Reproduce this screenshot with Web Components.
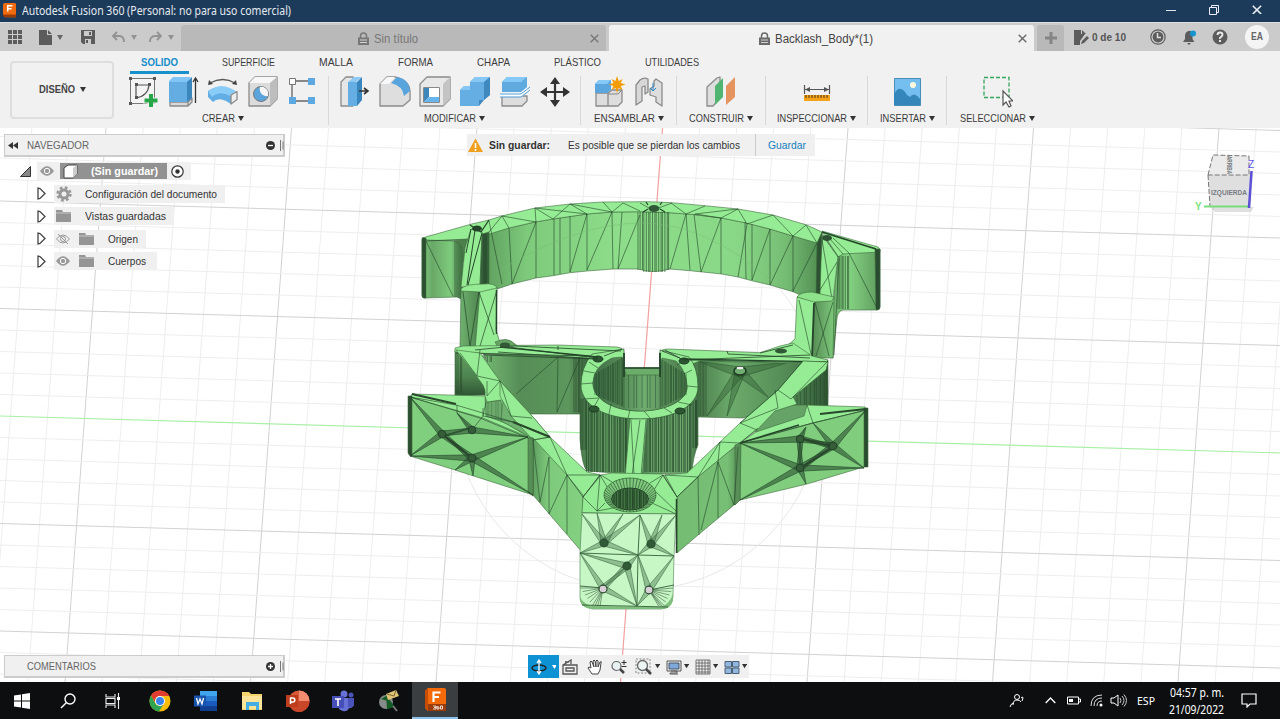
<!DOCTYPE html>
<html lang="es"><head><meta charset="utf-8"><title>Autodesk Fusion 360</title>
<style>html,body{margin:0;height:100%;overflow:hidden;background:#f1f1f1}body{font-family:"Liberation Sans",Arial,sans-serif;color:#333}</style></head>
<body><fusion-app></fusion-app>
<script>
const define=(name,cls)=>customElements.define(name,cls);
class Base extends HTMLElement{
  connectedCallback(){ if(this.shadowRoot)return; this.attachShadow({mode:'open'}).innerHTML='<style>:host{box-sizing:border-box}*{box-sizing:border-box}svg{display:block}</style>'+this.render(); this.ready&&this.ready(); }
}
const g='#5c5c5c';
const cube='stroke="#8b8b8b" stroke-width="1.3" stroke-linejoin="round"';
/* name: [width, height, markup] */
const ICONS={
 fusion:[14,16,'<path d="M2 0h10q2 0 2 2v13H2l-2-2V2q0-2 2-2z" fill="#f06a10"/><path d="M0 12h14v3H2l-2-2z" fill="#9a3c07"/><path d="M5 9V3h5M5 6h4" stroke="#fff" stroke-width="1.600" fill="none"/>'],
 apps:[14,14,`<g fill="${g}"><path d="M0 0h4v4H0zM5 0h4v4H5zM10 0h4v4h-4zM0 5h4v4H0zM5 5h4v4H5zM10 5h4v4h-4zM0 10h4v4H0zM5 10h4v4H5zM10 10h4v4h-4z"/></g>`],
 file:[13,15,`<path d="M0 0h8v5h5v10H0zM9 0l4 4H9z" fill="${g}"/>`],
 save:[14,14,`<path fill-rule="evenodd" d="M0 0h14v14H2l-2-2zM3 1v5h8V1zM4 9v5h6V9z" fill="${g}"/><path d="M8 2h2v3H8zM5 10h2v3H5z" fill="${g}"/>`],
 undo:[13,12,'<path d="M5 1L1 5l4 4M1 5h6q5 0 5 6" fill="none" stroke="#929292" stroke-width="1.800"/>'],
 redo:[13,12,'<path d="M8 1l4 4-4 4M12 5H6q-5 0-5 6" fill="none" stroke="#929292" stroke-width="1.800"/>'],
 drop:[6,5,'<path d="M0 0h6L3 5z" fill="currentColor"/>'],
 lock:[11,13,'<path d="M2.500 6V4q0-3 3-3t3 3v2" fill="none" stroke="currentColor" stroke-width="1.500"/><path d="M0 5.500h11V13H0z" fill="currentColor"/><path d="M2 8h7M2 10.500h7" stroke="#ddd" stroke-width=".9"/>'],
 x:[9,9,'<path d="M.7.7l7.600 7.600M8.300.7L.7 8.300" stroke="currentColor" stroke-width="1.400"/>'],
 plus:[12,12,'<path d="M6 0v12M0 6h12" stroke="#858585" stroke-width="3"/>'],
 min:[10,10,'<path d="M0 5.500h10" stroke="#dfe5ec"/>'],
 restore:[10,10,'<path d="M.5 2.500h7v7h-7zM2.500 2V.5h7v7H8" fill="none" stroke="#eef"/>'],
 docs:[15,15,`<path d="M0 0h7v4h4l-5 7v4H0zM8 0l4 4H8z" fill="${g}"/><path d="M7 14l1-3 5-5 2 2-5 5z" fill="${g}"/>`],
 clock:[16,16,`<circle cx="8" cy="8" r="7.200" fill="none" stroke="${g}" stroke-width="1.200"/><circle cx="8" cy="8" r="5.400" fill="${g}"/><path d="M7.500 4v4.500H11" fill="none" stroke="#ddd" stroke-width="1.500"/>`],
 bell:[15,15,`<path d="M1 12l2-3V6q0-4 3.500-5t4 5v3l2 3zM5 13h4l-2 2z" fill="${g}"/><circle cx="11" cy="3.500" r="3" fill="#1596d1"/>`],
 help:[16,16,`<circle cx="8" cy="8" r="7.500" fill="${g}"/><path d="M5.500 6q0-2.500 2.500-2.500t2.500 2.300q0 1.200-1.500 2T8 10" fill="none" stroke="#e8e8e8" stroke-width="1.900"/><path d="M7 11h2v2H7z" fill="#e8e8e8"/>`],
 sketch:[32,32,`<path d="M3.500 2.500h24v25h-24z" fill="#f4f4f4" stroke="#777"/><path d="M10 9h12M9 22V9M9 22q12-2 13-13" fill="none" stroke="#555" stroke-width="1.200"/><path d="M2 1h3v3H2zM26 1h3v3h-3zM2 26h3v3H2zM8 7h3v3H8zM21 7h3v3h-3zM8 20h3v3H8z" fill="#555"/><path d="M23.500 17v15M16 24.500h16" stroke="#f2f2f2" stroke-width="6"/><path d="M24 18v13M17.500 24.500h13" stroke="#27a549" stroke-width="4"/>`],
 extrude:[32,32,`<g ${cube}><path d="M3 26h18v4H3zM21 26l4-4v4l-4 4z" fill="#d8d8d8"/></g><path d="M2 5l4-4h18l-3 5H2z" fill="#80c5f5"/><path d="M2 6h18v20H2z" fill="#63ade3"/><path d="M20 6l5-5v21l-5 4z" fill="#3b86bd"/><path d="M28.500 27V3M26 6l2.500-4L31 6" stroke="#333" stroke-width="1.300" fill="none"/>`],
 revolve:[32,32,`<path d="M3 7Q16 0 28 7" fill="none" stroke="#555" stroke-width="1.300"/><path d="M1 9l1-5 4 4zM30 9l-1-5-4 4z" fill="#444"/><path d="M1 15q14-9 25 0l4 1-6 12-5-3q-8-4-13 1l-5-5z" fill="#62ade4"/><path d="M1 15q14-10 29 1l-7 4Q13 14 5 21z" fill="#8accf8"/><path d="M24 19l6-3.500v8L24 28z" fill="#eee" ${cube}/>`],
 hole:[32,32,`<path d="M2 7l6-6h22v22l-7 7H2z" fill="#dcdcdc" ${cube}/><path d="M2 7l6-6h22l-7 6z" fill="#f7f7f7"/><path d="M23 7l7-6v22l-7 7z" fill="#bdbdbd"/><circle cx="14" cy="18" r="7.500" fill="#5ba5dc" stroke="#777"/><path d="M13 11a7 7 0 0 0 8 9q1-6-3-8-2-2-5-1z" fill="#f5f5f5"/>`],
 pattern:[32,32,'<path d="M5 7v18M9 5h13M9 25h13" stroke="#666" stroke-width="1.300"/><path d="M2.500 2.500h6v6h-6z" fill="#fff" stroke="#777"/><path d="M21 2h7v7h-7zM2 21h7v7H2zM21 21h7v7h-7z" fill="#5da8e0"/>'],
 press:[32,32,`<path d="M2 6l5-5h7v29H2z" fill="#e6e6e6" ${cube}/><path d="M9 6l6-5h8l-6 5z" fill="#8ccaf5"/><path d="M9 6h9v24H9z" fill="#64aee4"/><path d="M18 6l5-5v23l-5 6z" fill="#3985be"/><path d="M20 15h8M25 12l4 3-4 3" fill="none" stroke="#333" stroke-width="1.600"/>`],
 fillet:[32,32,`<path d="M1 8l7-7h8q14 3 15 14v9l-7 6H1z" fill="#dedede" ${cube}/><path d="M1 8l7-7h8l-6 7z" fill="#f8f8f8"/><path d="M12 7l6-6q12 2 13 14l-6 5Q24 10 12 7z" fill="#58a4dc"/>`],
 shell:[32,32,`<path d="M1 8l7-7h23v22l-7 7H1z" fill="#e8e8e8" ${cube}/><path d="M24 8l7-7v22l-7 7z" fill="#c4c4c4"/><path d="M4.500 11.500h16v15h-16z" fill="#fff" stroke="#888"/><path d="M5 12h5v9l-5 5z" fill="#3d86bb"/><path d="M5 26l5-5h10v5z" fill="#68b5ee"/>`],
 combine:[32,32,'<path d="M11 6l5-5h15v18l-6 5h-4l-1 6H1V14l4-4h6z" fill="#65aee4"/><path d="M11 6l5-5h15l-6 5zM1 14l4-4h6v4z" fill="#86c7f5"/><path d="M25 6l6-5v18l-6 5zM20 24h5l-5 6z" fill="#4089be"/>'],
 split:[32,32,`<path d="M3 20h25v5l-5 5H3z" fill="#ddd" ${cube}/><path d="M3 6l5-5h20v11l-6 4H3z" fill="#60aae0"/><path d="M3 6l5-5h20l-6 5z" fill="#85c9f8"/><path d="M1 19h21l8-7" stroke="#fff" stroke-width="4" fill="none"/><path d="M1 18h21l9-7M1 21h21l9-7" stroke="#4f9bd4" fill="none"/>`],
 move:[32,32,'<path d="M16 4v24M4 16h24" stroke="#333" stroke-width="2.200"/><path d="M16 1l5 7H11zM16 31l5-7H11zM1 16l7-5v10zM31 16l-7-5v10z" fill="#333"/>'],
 component:[32,32,`<path d="M3 17h12v13H3zM15 17l4-3h10v12l-4 4H15z" fill="#ddd" ${cube}/><path d="M2 8l4-4h12v10l-4 3H2z" fill="#5ba6de"/><path d="M2 8l4-4h12l-4 4z" fill="#86c8f7"/><path d="M15 18h10l4-4" stroke="#888" fill="none"/><path d="M23 0l1.700 5 4-2-2 4 5 1.500-5 1.500 2 4-4-2L23 17l-1.500-5-4 2 2-4-5-1.500 5-1.500-2-4 4 2z" fill="#f59d00" transform="translate(1)"/>`],
 joint:[32,32,`<path d="M3 9l4-5q4-3 8-1v13l-3 2v-8l-3 1v14l-6 4z" fill="#d8d8d8" ${cube}/><path d="M17 13l4-3V5l2-2 6 4v23l-6-4v-5l-6-2z" fill="#ddd" ${cube}/><path d="M20 7v8M17 12l3 3 3-3" stroke="#2687c5" fill="none"/>`],
 plane:[32,32,`<path d="M2 11L12 2l3-1v21L8 30H2z" fill="#dedede" ${cube}/><path d="M10 10L18 2v19l-8 8z" fill="#4fb571"/><path d="M21 10L30 1v20l-9 8z" fill="#e5935f"/>`],
 ruler:[32,32,'<path d="M3.500 9v9M28.500 9v9M4 13.500h24" stroke="#555" stroke-width="1.200"/><path d="M4 13.500l5-2.500v5zM28 13.500l-5-2.500v5z" fill="#555"/><path d="M3 19h26v6H3z" fill="#f5a31a"/><path d="M5 19v3M8 19v3M11 19v3M14 19v3M17 19v3M20 19v3M23 19v3M26 19v3" stroke="#4b3510"/>'],
 image:[32,32,'<path d="M3.500 2.500h26v27h-26z" fill="#75bff0" stroke="#478eb9"/><path d="M3 18q6-11 13 1l3 2q4-6 10 2v6H3z" fill="#3587bb"/><circle cx="22" cy="9" r="3" fill="#fff9dc"/>'],
 select:[32,32,'<path d="M3 1.500h25v20H3z" fill="none" stroke="#36a65a" stroke-width="1.300" stroke-dasharray="4 2"/><path d="M23 15v14l3-3 3 5 2-1-2-5h4z" fill="#fff" stroke="#555" stroke-width="1.200" transform="translate(-1)"/>'],
 rew:[10,7,'<path d="M5 0v7L0 3.500zM10 0v7L5 3.500z" fill="#333"/>'],
 minus:[9,9,'<circle cx="4.500" cy="4.500" r="4.500" fill="#333"/><path d="M2 4.500h5" stroke="#fff" stroke-width="1.300"/>'],
 add:[9,9,'<circle cx="4.500" cy="4.500" r="4.500" fill="#333"/><path d="M2 4.500h5M4.500 2v5" stroke="#fff" stroke-width="1.300"/>'],
 grip:[4,11,'<path d="M.5 0v11M3 1.500v8" stroke="#777"/>'],
 open:[11,11,'<path d="M.5 10.500h10v-10z" fill="#888" stroke="#333"/>'],
 closed:[9,13,'<path d="M1 1v11l2-.5 5-5-5-5z" fill="#fff" stroke="#444" stroke-width="1.300"/>'],
 eye:[14,10,'<path d="M0 5q7-9.500 14 0-7 9.500-14 0z" fill="#999"/><circle cx="7" cy="5" r="2.700" fill="#999" stroke="#fff"/>'],
 eyeoff:[14,12,'<path d="M.5 6q6.500-8 13 0-6.500 8-13 0z" fill="none" stroke="#999"/><circle cx="7" cy="6" r="2.500" fill="none" stroke="#999"/><path d="M2 1l10 10" stroke="#999"/>'],
 body:[15,15,'<path d="M1 4l4-3h9v9l-4 4H1z" fill="#fff" stroke="#444"/><path d="M10 4l4-3v9l-4 4z" fill="#ccc"/>'],
 radio:[13,13,'<circle cx="6.500" cy="6.500" r="5.700" fill="#fff" stroke="#333" stroke-width="1.200"/><circle cx="6.500" cy="6.500" r="2.200" fill="#333"/>'],
 gear:[16,16,'<circle cx="8" cy="8" r="6.200" fill="none" stroke="#999" stroke-width="3" stroke-dasharray="2.600 2.270"/><circle cx="8" cy="8" r="4" fill="none" stroke="#999" stroke-width="3"/>'],
 folder:[15,12,'<path d="M0 0h6l1 2h8v10H0z" fill="#959595"/><path d="M0 3h15" stroke="#d5d5d5" stroke-width=".8"/>'],
 warn:[15,14,'<path d="M7.500.5L15 14H0z" fill="#f0a01e"/><path d="M7.500 5v5M7.500 11v2" stroke="#fff" stroke-width="1.600"/>'],
 orbit:[16,16,'<ellipse cx="8" cy="9" rx="7" ry="3" fill="none" stroke="#222" stroke-width="1.500"/><path d="M8 2v12M6 4l2-3 2 3M6 12l2 3 2-3" fill="none" stroke="#fff" stroke-width="1.300"/>'],
 look:[16,16,'<path d="M2 6h13v9H1V6zM4 9h8v3H4zM1 6l8-5v4M3 3h4" fill="none" stroke="#555" stroke-width="1.300"/>'],
 hand:[16,16,'<path d="M5 15L1 9q0-2 3 0L3 3q1-2 2 0l2 5-1-6q1-2 2 0l1 6V2q1-2 2 0v6l2-5q2-1 1 1l-1 7-2 4z" fill="#fff" stroke="#444"/>'],
 zoom:[16,16,'<circle cx="5.500" cy="7" r="4.500" fill="#e8f1f3" stroke="#666" stroke-width="1.200"/><path d="M9 10l4 4" stroke="#444" stroke-width="2.500"/><path d="M13 1v5M10.500 3.500h5M10.500 7.500h5" stroke="#333"/>'],
 window:[17,17,'<path d="M1 1h14v14H1z" fill="none" stroke="#888" stroke-dasharray="2 1.500"/><circle cx="7.500" cy="7.500" r="5" fill="#edf4f4" stroke="#666" stroke-width="1.300"/><path d="M11 11l5 5" stroke="#444" stroke-width="2.500"/>'],
 display:[16,16,'<path d="M1 2h14v10H1z" fill="#eee" stroke="#555"/><path d="M3 4h10v6H3z" fill="#7fa7d9" stroke="#456"/><path d="M5 12h6v2H4v1h8" fill="none" stroke="#555"/>'],
 grid:[16,16,'<path d="M1 1h14v14H1zM4 1v14M7 1v14M10 1v14M13 1v14M1 4h14M1 7h14M1 10h14M1 13h14" fill="none" stroke="#666" stroke-width=".9"/>'],
 views:[16,14,'<path d="M1 1.500h6.500V7H1zM8.500 1.500H15V7H8.500zM1 8h6.500v5.500H1zM8.500 8H15v5.500H8.500z" fill="#91b7e1" stroke="#4c6075"/>'],
 win:[16,16,'<path d="M0 2.500l7-1v6H0zM8 1.300L16 0v7.500H8zM0 8.500h7v6l-7-1zM8 8.500h8V16l-8-1.300z" fill="#fff"/>'],
 search:[16,16,'<circle cx="10" cy="6" r="5" fill="none" stroke="#fff" stroke-width="1.400"/><path d="M6.500 9.500L1 15" stroke="#fff" stroke-width="1.400"/>'],
 task:[16,16,'<path d="M1 1v3h9V1M1 15v-3h9v3M1 5.500h9v5H1zM13.500 0v16" fill="none" stroke="#eee" stroke-width="1.100"/><path d="M12 4h3v3h-3z" fill="#fff"/>'],
 chrome:[22,22,'<circle cx="11" cy="11" r="10.500" fill="#fbbc05"/><path d="M2 5.500A10.500 10.500 0 0 1 20.300 6H11a5 5 0 0 0-4.500 7z" fill="#e23d32"/><path d="M2 5.500A10.500 10.500 0 0 0 10 21.500l5-8a5 5 0 0 1-8.500 0z" fill="#30a350"/><circle cx="11" cy="11" r="5" fill="#fff"/><circle cx="11" cy="11" r="4" fill="#3b82ed"/>'],
 word:[24,20,'<path d="M6 0h17v5H6z" fill="#41a5ee"/><path d="M6 5h17v5H6z" fill="#2b7cd3"/><path d="M6 10h17v5H6z" fill="#185abd"/><path d="M6 15h17v5H6z" fill="#103f91"/><path d="M0 4.500h12v11H0z" fill="#1853ae"/><path d="M2.500 7l1.500 6 2-5 2 5 1.500-6" stroke="#fff" stroke-width="1.300" fill="none"/>'],
 explorer:[22,20,'<path d="M1 1h7l2 2h11v16H1z" fill="#f5d36d"/><path d="M1 5h20v13H1z" fill="#ffe59a"/><path d="M5 19v-8h13v8h-3v-4H8v4z" fill="#44aee5"/>'],
 power:[24,22,'<circle cx="13" cy="11" r="10.500" fill="#d85a3b"/><path d="M13 .5A10.500 10.500 0 0 1 23.500 11H13z" fill="#f28d70"/><path d="M2.500 11h21A10.500 10.500 0 0 1 4 17z" fill="#c94728"/><path d="M0 5h12v12H0z" fill="#bd3d1d"/><path d="M4.500 14V8h2.300q2 0 2 2t-2 2H5" stroke="#fff" stroke-width="1.500" fill="none"/>'],
 teams:[24,22,'<circle cx="13" cy="4" r="3.500" fill="#6671d6"/><circle cx="20" cy="5" r="2.500" fill="#4b55ba"/><path d="M7 8h16v7q-2 4-5 3-2 4-6 3-5-1-5-6z" fill="#6671d6"/><path d="M17 8h6v7q-2 4-6 2z" fill="#4953b9"/><path d="M1 6h12v12H1z" fill="#464eb8"/><path d="M4 9h6M7 9v7" stroke="#fff" stroke-width="1.600"/>'],
 solver:[22,22,'<circle cx="8" cy="12" r="7" fill="#858b87"/><path d="M8 5l9 12-8 2zM3 9l7-4v6z" fill="#135c25"/><path d="M8 4l10-4 3 6-11 4z" fill="#dfc576"/><path d="M9 4l7 2 2-6" fill="none" stroke="#7d642e"/><path d="M15 16l4 5" stroke="#777" stroke-width="2"/>'],
 f360:[21,23,'<path d="M3 0h16q2 0 2 2v21H3l-3-3V3z" fill="#f46a0a"/><path d="M0 3l3-3v23l-3-3z" fill="#c84c04"/><path d="M3 16h18v7H3z" fill="#9a3b09"/><path d="M8.500 14V4.500h7M8.500 9H14" stroke="#fff" stroke-width="2.200" fill="none"/><path d="M8 18h3v3H8M9 19.500h2M12 18v3h2v-2h-2M15.500 18h2v3h-2z" stroke="#fff" stroke-width=".8" fill="none"/>'],
 people:[15,15,'<circle cx="8" cy="4" r="2.500" fill="none" stroke="#fff"/><path d="M4 12q0-5 4-5 3 0 4 2M1 14q1-4 4-4M12 5q2-2 2 0l-1 3" fill="none" stroke="#fff"/>'],
 up:[11,7,'<path d="M.7 6L5.500 1l4.800 5" fill="none" stroke="#fff" stroke-width="1.300"/>'],
 battery:[15,9,'<path d="M1.500 1h11v7h-11zM13 3h1.500v3H13" fill="none" stroke="#fff"/><path d="M3 3h4v3H3z" fill="#fff"/>'],
 wifi:[13,13,'<path d="M1 12Q1 1 12 1M4 12q0-8 8-8M7 12q0-5 5-5" fill="none" stroke="#ddd"/><circle cx="11" cy="11" r="1.500" fill="#fff"/>'],
 sound:[17,13,'<path d="M1 4h3l4-3v11L4 9H1z" fill="none" stroke="#fff"/><path d="M10 4q2 2.500 0 5M12 2q4 4.500 0 9M14 .5q5 6 0 12" fill="none" stroke="#ccc"/>'],
 note:[16,15,'<path d="M1 1h14v10H9l-3 3v-3H1z" fill="none" stroke="#fff" stroke-width="1.200"/>']
};
define('ui-icon',class extends Base{render(){const [w,h,m]=ICONS[this.getAttribute('name')],s=+(this.getAttribute('scale')||1);
 return `<style>:host{display:block;flex:none;width:${w*s}px;height:${h*s}px}</style><svg width="${w*s}" height="${h*s}" viewBox="0 0 ${w} ${h}">${m}</svg>`}});
define('ui-label',class extends Base{
 render(){const a=n=>this.getAttribute(n);return `<style>:host{display:block;flex:none;white-space:nowrap;font-size:${a('s')||11}px;line-height:${a('lh')||14}px;${a('b')?'font-weight:bold;':''}${a('c')?'color:'+a('c')+';':''}${a('f')?`font-family:"${a('f')}",sans-serif;`:''}}span{display:inline-block;transform-origin:0 50%}</style><span><slot></slot></span>`}
 ready(){const w=+this.getAttribute('w');if(!w)return;const s=this.shadowRoot.querySelector('span'),n=s.getBoundingClientRect().width;this.style.width=w+'px';if(n)s.style.transform=`scaleX(${w/n})`}
});
define('title-bar',class extends Base{render(){return `<style>:host{display:flex;height:22px;background:#1c3a5a;align-items:center;padding:0 18px 1px 3px;gap:5px}i{flex:1}.w{display:flex;gap:33px;align-items:center;color:#e9eef4;margin-top:-2px}ui-label{margin-top:1px;margin-left:1px}</style>
<ui-icon name="fusion" scale=".95"></ui-icon><ui-label s="12" lh="20" w="269" f="Noto Sans" c="#e6ebf1">Autodesk Fusion 360 (Personal: no para uso comercial)</ui-label><i></i><div class="w"><ui-icon name="min"></ui-icon><ui-icon name="restore"></ui-icon><ui-icon name="x" scale="1.1"></ui-icon></div>`}});
define('doc-tab',class extends Base{render(){return `<style>:host{display:flex;align-items:center;height:26px;align-self:flex-end;color:#777;background:#b9b9b9;border-radius:3px 3px 0 0;padding:0 7px 0 5px}:host([active]){background:#f1f1f1;color:#6a6a6a}.m{flex:1;display:flex;justify-content:center;gap:5px;align-items:center;padding-top:1px}</style><div class="m"><ui-icon name="lock"></ui-icon><slot></slot></div><ui-icon name="x"></ui-icon>`}});
define('tab-bar',class extends Base{render(){return `<style>:host{display:flex;height:29px;background:#cbcbcb;color:#666;align-items:center;border-top:1px solid #dedede}
.q{width:181px;display:flex;align-items:center;padding-left:8px}.d{color:#929292}
.p{width:27px;height:26px;align-self:flex-end;background:#b9b9b9;display:flex;align-items:center;justify-content:center;margin-left:3px;border-radius:3px 3px 0 0}
.r{flex:1;display:flex;align-items:center;padding-left:10px}.av{width:24px;height:24px;border-radius:50%;background:#f4f4f4;display:flex;align-items:center;justify-content:center;margin-left:17px}</style>
<div class="q"><ui-icon name="apps"></ui-icon><ui-icon name="file" style="margin-left:17px"></ui-icon><ui-icon name="drop" style="margin-left:5px"></ui-icon><ui-icon name="save" style="margin-left:18px"></ui-icon><ui-icon class="d" name="undo" style="margin-left:17px"></ui-icon><ui-icon class="d" name="drop" style="margin-left:6px"></ui-icon><ui-icon class="d" name="redo" style="margin-left:12px"></ui-icon><ui-icon class="d" name="drop" style="margin-left:6px"></ui-icon></div>
<doc-tab style="width:425px"><ui-label s="12.5" w="44" c="#777">Sin título</ui-label></doc-tab><doc-tab active style="width:425px;margin-left:3px"><ui-label s="12.5" w="98" c="#444">Backlash_Body*(1)</ui-label></doc-tab>
<div class="p"><ui-icon name="plus"></ui-icon></div><div class="r"><ui-icon name="docs"></ui-icon><ui-label s="11" w="34" b="1" c="#555" style="margin-left:3px">0 de 10</ui-label><ui-icon name="clock" style="margin-left:24px"></ui-icon><ui-icon name="bell" style="margin-left:16px"></ui-icon><ui-icon name="help" style="margin-left:15px"></ui-icon><div class="av"><ui-label s="10" w="12" b="1" c="#666">EA</ui-label></div></div>`}});
define('tool-group',class extends Base{render(){return `<style>:host{display:flex;flex-direction:column;align-items:center;border-right:1px solid #d8d8d8;height:49px;justify-content:space-between}:host([last]){border:0}.i{display:flex;gap:8px;height:32px}.l{display:flex;gap:3px;align-items:center;height:14px}</style><div class="i">${this.getAttribute('icons').split(' ').map(n=>`<ui-icon name="${n}"></ui-icon>`).join('')}</div><div class="l"><ui-label s="11.5" w="${this.getAttribute('lw')}" c="#3c3c3c">${this.getAttribute('label')}</ui-label><ui-icon name="drop" style="color:#333"></ui-icon></div>`}});
define('tool-ribbon',class extends Base{render(){const G=[[212,'CREAR',33,'sketch extrude revolve hole pattern'],[252,'MODIFICAR',52,'press fillet shell combine split move'],[96,'ENSAMBLAR',61,'component joint'],[89,'CONSTRUIR',55,'plane'],[102,'INSPECCIONAR',70,'ruler'],[79,'INSERTAR',46,'image'],[100,'SELECCIONAR',66,'select']];
const T=[['SUPERFICIE',53],['MALLA',34],['FORMA',35],['CHAPA',33],['PLÁSTICO',47],['UTILIDADES',54]];
return `<style>:host{display:flex;height:78px;background:#f1f1f1;border-bottom:1px solid #ddd;padding-left:10px}.d{width:104px;height:58px;border:2px solid #dedede;border-radius:4px;margin-top:10px;display:flex;align-items:center;justify-content:center;gap:5px;padding-bottom:2px}.m{margin-left:3px;display:flex;flex-direction:column}.t{display:flex;gap:44.200px;height:23px;align-items:center;padding-left:13px}.t>ui-label{margin-top:-2px}.a{height:23px;width:59px;border-bottom:3px solid #1790cc;display:flex;justify-content:center;align-items:flex-start;padding-top:4px;margin-right:-11px}.g{display:flex;margin-top:2px}</style>
<div class="d"><ui-label s="11" b="1" w="36" c="#444">DISEÑO</ui-label><ui-icon name="drop"></ui-icon></div><div class="m"><div class="t"><div class="a"><ui-label s="11" b="1" w="37" c="#168dc8">SOLIDO</ui-label></div>${T.map(t=>`<ui-label s="11" w="${t[1]}" c="#3c3c3c">${t[0]}</ui-label>`).join('')}</div><div class="g">${G.map((x,i)=>`<tool-group ${i==6?'last':''} style="width:${x[0]}px" label="${x[1]}" lw="${x[2]}" icons="${x[3]}"></tool-group>`).join('')}</div></div>`}});
define('panel-head',class extends Base{render(){return `<style>:host{display:flex;width:281px;height:23px;background:#f0f0f0;border:1px solid #ccc;border-width:1px 2px 2px 1px;align-items:center;padding-left:3px;gap:9px}i{flex:1}.k{width:10px}</style><div class="k">${this.hasAttribute('rew')?'<ui-icon name="rew"></ui-icon>':''}</div><slot></slot><i></i><ui-icon name="${this.getAttribute('end')}"></ui-icon><ui-icon name="grip" style="margin-left:-4px;margin-right:-1px"></ui-icon>`}});
define('tree-row',class extends Base{render(){const a=n=>this.getAttribute(n);const ic=a('icons').split(' ');return `<style>:host{display:flex;height:22.500px;align-items:center;padding-left:32.500px}.c{display:flex;margin-left:8.500px;height:18px;background:#f0f0f0;align-items:center;padding:0 ${a('pr')||8}px 0 2px}ui-label{margin-left:${a('gap')||14}px}ui-icon+ui-icon{margin-left:9px}</style><ui-icon name="closed"></ui-icon><div class="c">${ic.map(n=>`<ui-icon name="${n}"></ui-icon>`).join('')}<ui-label s="11" w="${a('w')}" c="#333">${a('label')}</ui-label></div>`}});
define('browser-tree',class extends Base{render(){return `<style>:host{display:block;padding-top:3px}.r{display:flex;height:22.500px;align-items:center;padding-left:16px}.b{display:flex;align-items:center;background:#f0f0f0;height:18px;margin-left:6px;padding:0 7px 0 3px}.s{display:flex;align-items:center;background:#929292;height:16px;width:107px;margin:0 4px 0 6px;padding-left:3px;gap:13px}</style><div class="r"><ui-icon name="open"></ui-icon><div class="b"><ui-icon name="eye"></ui-icon><div class="s"><ui-icon name="body"></ui-icon><ui-label s="11" b="1" w="67" c="#fff">(Sin guardar)</ui-label></div><ui-icon name="radio"></ui-icon></div></div>
<tree-row icons="gear" label="Configuración del documento" w="132" gap="12.5"></tree-row><tree-row icons="folder" label="Vistas guardadas" w="81" gap="13.5"></tree-row><tree-row icons="eyeoff folder" label="Origen" w="30"></tree-row><tree-row icons="eye folder" label="Cuerpos" w="38" pr="11"></tree-row>`}});
define('save-notice',class extends Base{render(){return `<style>:host{display:flex;align-items:center;height:22px;width:348px;background:#f0f0f0;padding-left:1px}.l{border-left:1px solid #ccc;margin-left:15px;height:22px;display:flex;align-items:center;padding-left:12px}</style><ui-icon name="warn"></ui-icon><ui-label s="11" b="1" w="61" c="#333" style="margin-left:6px">Sin guardar:</ui-label><ui-label s="11" w="172" c="#333" style="margin-left:18px">Es posible que se pierdan los cambios</ui-label><div class="l"><ui-label s="11" w="38" c="#1680bd">Guardar</ui-label></div>`}});
define('view-bar',class extends Base{render(){return `<style>:host{display:flex;align-items:center;height:23px;width:221px;background:#f0f0f0;color:#333}.a{display:flex;align-items:center;justify-content:center;gap:5px;width:31px;height:23px;background:#0d93d4;color:#fff}.n{margin-left:2px}</style><div class="a"><ui-icon name="orbit"></ui-icon><ui-icon name="drop" scale=".8"></ui-icon></div><ui-icon name="look" style="margin-left:3px"></ui-icon><ui-icon name="hand" style="margin-left:9px"></ui-icon><ui-icon name="zoom" style="margin-left:8px"></ui-icon><ui-icon name="window" style="margin-left:8px"></ui-icon><ui-icon name="drop" scale=".85" style="margin-left:3px"></ui-icon><ui-icon name="display" style="margin-left:6px"></ui-icon><ui-icon name="drop" scale=".85" class="n"></ui-icon><ui-icon name="grid" style="margin-left:6px"></ui-icon><ui-icon name="drop" scale=".85" class="n"></ui-icon><ui-icon name="views" style="margin-left:6px"></ui-icon><ui-icon name="drop" scale=".85" class="n"></ui-icon>`}});

/* Ground grid, printed part and view cube, in window coordinates */
define('model-scene',class extends Base{render(){
 let s='';const line=(a,b,c,d,col,w=1)=>s+=`<path d="M${a} ${b}L${c} ${d}" stroke="${col}" stroke-width="${w}"/>`;
 for(let i=-20;i<20;i++){const x=662.5+i*37.1;if(i)line(x,128,x-41,682,i%5?'#eeeeee':'#d2d2d2')}
 for(let j=-15;j<13;j++){const y=416+j*21.5;if(j)line(0,y,1280,y+37,j%5?'#eeeeee':'#d2d2d2')}
 line(0,416,1280,453,'#a9efa6',1.2);line(662.5,128,620.5,682,'#f3a0a0',1.2);
 s+='<circle cx="638" cy="406" r="184" fill="none" stroke="#e8e8e8"/>';
 const P=(pts,f,st='#3d6a3d',w=.6)=>s+=`<path d="M${pts}z" fill="${f}" stroke="${st}" stroke-width="${w}" stroke-linejoin="round"/>`;
 const M=(d,w=.6,c='#24452a')=>s+=`<path d="${d}" fill="none" stroke="${c}" stroke-width="${w}" stroke-linejoin="round"/>`;
 /* shaded sliver triangles that fan out from a screw hole */
 const fan=(x,y,r,ends,c='#24472a',o=.55)=>{for(const [a,b] of ends){const l=Math.hypot(a-x,b-y),nx=-(b-y)/l*r,ny=(a-x)/l*r;s+=`<path d="M${x+nx} ${y+ny}L${a} ${b}L${x-nx} ${y-ny}z" fill="${c}" fill-opacity="${o}" stroke="${c}" stroke-width=".6"/>`}};
 const stripes=(x0,x1,n,top,bot,c='#27482a',w=.6)=>{let d='';for(let i=0;i<=n;i++){const t=(i+((i*7)%3-1)*.2)/n,x=x0+(x1-x0)*Math.min(1,Math.max(0,t));d+=`M${x.toFixed(1)} ${top(x)}V${bot(x)}`}M(d,w,c)};
 const L='#96ec94';
 /* rear arch */
 P('483 233L509 228 535 222 553 219 587 214 612 212 640 211.700 670 212.700 695 214.700 721.700 218 745 222.700 770 229 793 236 819 243 817 300 798 294 793 291.700 770 285 751.700 280.700 738 277 721.700 274 690 270.700 670 269 Q653 274 638 269L613 269 587 271 570 272.700 553 275.700 536 278 512 284 497 289 484 289','url(#arch)');
 P('422 238L471.700 224 489 220 501.700 216 535 208 570 204 603 202 648 201.700 671.700 202.700 705 205.700 738 209 773 215 806.700 225 822 232 826 247 817 243 793 236 770 229 745 222.700 721.700 218 695 214.700 670 212.700 640 211.700 612 212 587 214 553 219 535 222 509 228 483 236 470 240 426 241',L);
 M('M489 232L502 216 509 228 512 284 536 222V278M489 221L502 284M554 219V275M536 222L502 216M536 222L535 208 553 219 570 204 587 214 535 208M560 218V274M570 216V272L587 214V270L612 212M570 204L612 212M603 202L612 212 623 203 640 211M622 212L618 269 640 215M612 212L613 269M670 269L686 214 690 270M694 214L701 272 721 218V274M738 209L721 218 695 214 738 209 747 224 738 277M745 222L746 279 M752 224V280L770 229V285L793 236V292M817 243L793 291M773 215L747 224M773 215L793 236 806 225 817 243M671 203L686 214 705 206M653 210L672 203M640 203L649 208');
 stripes(638,669,15,()=>212,x=>270+((x>643&&x<665)?2:0),'#315a34',.7);
 M('M500 270Q575 224 640 223T773 282',.5,'#79bd77');
 s+='<ellipse cx="654" cy="208.500" rx="5.500" ry="3.500" fill="#315937"/>';M('M648 205l-2-3M660 205l2-3M643 212l5-3M665 212l-5-3',1.2);
 /* left tab and strut */
 P('422 240Q423 236 427 240L454 241Q463 243 463 252V300L457 297 424 298Q422 298 422 295','url(#tabL)');P('422 238h4v60h-2q-2 0-2-3','#2d4f31');
 M('M426 241L453 296M426 241L470 239M455 242V297M457 242V297M459 243V298M461 245V299');
 P('454 241L470 239 466 262 463 262V250Q460 242 454 241','#4c7f4d');
 P('471 229L482 232 480 287 461 287 465 248',L);P('482 234L489 232 489 288 480 286','#35613a');M('M475 230L467 285M482 233L468 285M471 229L466 253M484 234V286M486 234V288',1);
 s+='<ellipse cx="477" cy="228.500" rx="5" ry="3" fill="#25442a"/>';M('M489 220L481 232 470 225',1.3);
 P('461 291L480 289 478 350 460 348','url(#dk)');P('480 290L497 287 496 330 500 343 508 350 475 350',L);P('461 289Q465 284 484 284Q495 283 497 288L480 292 461 291',L);M('M463 292L470 346 479 292M479 292L494 335M480 346L497 290',.7);M('M496.500 290V334',1.5);
 P('495 342Q507 336 515 344L520 348 500 351','#66a565');
 /* right tab and tower */
 P('838 254L843 252 880 250V307Q880 310 877 310L843 310Q838 311 837 318L833 358 826 356 834 297','url(#tabR)');P('822 231L878 247Q881 249 880 252L843 254 838 257',L);P('875 249h5v58q0 3-4 3z','#294b2f');
 M('M822 232L876 249',1.8);M('M830 239L843 254M833 238L849 253');stripes(838,849,6,()=>256,()=>309);M('M849 253L877 308M839 258L834 355');
 P('823 235L838 256 833 299 817 296',L);P('817 243L822 232 820 294 816 295','#2d5231');M('M823 236L838 257M822 240L832 299M820 290L837 262');s+='<ellipse cx="827" cy="238" rx="5" ry="3" fill="#2d5231"/>';
 P('797 297L815 301 812 360 780 352 795 339',L);P('815 301L834 297 833 358 812 358','url(#dk2)');P('797 297Q800 292 812 292L834 297 832 301 814 302','#8ee28c');M('M799 300L811 354M815 302L829 356M833 302L816 356');M('M814 303L812 358',1.8);
 /* back walls */
 P('455 350L483 356 490 380 485 395 455 396','url(#dkl)');P('483 354L590 356 581 414 530 414 498 384','url(#wallL)');P('690 360L828 360 828 407 790 405 743 418 698 417','url(#wallR)');
 stripes(456,462,3,()=>352,()=>393);stripes(485,492,3,()=>356,()=>362);stripes(797,827,9,x=>395-(x-797)*.9,()=>406);M('M558 357L557 412M516 394L558 357M557 412L580 358');stripes(574,582,4,()=>358,()=>412);stripes(699,706,4,()=>362,()=>416);
 fan(740,372,5,[[707,416],[727,416],[768,397],[697,361],[790,362]],'#2f5a33',.4);s+='<ellipse cx="740" cy="371" rx="6" ry="4" fill="#6fae70" stroke="#1d3822" stroke-width="1.500"/><ellipse cx="740" cy="368" rx="3.500" ry="1.300" fill="#eee"/>';
 /* ring and bar */
 P('580 384L580 440Q582 466 587 471L627 474 632 418 645 418 642 474 692 473Q693 456 698 445L698 386','url(#cyl)');
 stripes(581,627,24,x=>398+(x-580)*.35,x=>x<586?450:472,'#1f3f25',.7);stripes(645,697,27,x=>418-(x-645)*.35,x=>x>692?448:472,'#1f3f25',.7);
 P('455 348L463 346 558 345 617 347Q624 348 624 353V377L602 366Q593 360 587 358L500 354 455 352',L);
 P('660 376V352Q662 349 668 349L760 352.700 780 346 793 343 812 356 828 360 825 364 700 361',L);
 s+=`<path fill-rule="evenodd" d="M624 366L624 349 592 354Q581 368 581 385C581 405 605 419 640 419S698 405 698 387Q698 368 689 357L660 350V366L678 371Q687 377 687 387C687 401 665 411 640 411S593 400 593 383Q593 374 606 367z" fill="${L}" stroke="#315b35" stroke-width=".7"/>`;
 P('593 383Q593 367 612 358L622 357 624 377V368H660V377L662 358 676 361Q687 371 687 387C687 401 665 411 640 411S593 400 593 383','url(#bore)');
 stripes(595,623,18,x=>374-(x-595)*.6,x=>395+(x-595)*.42,'#24492a',.65);stripes(624,660,8,()=>375,()=>408,'#2a5030',.5);stripes(661,686,14,x=>359+(x-661)*.6,x=>408-(x-660)*.5,'#24492a',.65);
 P('624 368H660V375H626','#6bad6a');M('M624 368H661',1.6);M('M660 353V377M624 353V377',1.8);
 M('M581 384L593 383M583 399L599 398 594 407M609 414L611 404M628 418L630 410M644 411L650 418M664 408L672 413M678 402L692 405M698 387L687 386M692 370L684 374M584 371L595 373M589 362L598 368M685 360L677 365');
 for(const [x,y]of[[598,359],[594,409],[680,411],[684,361]])s+=`<ellipse cx="${x}" cy="${y}" rx="5" ry="3" fill="#2c5531" stroke="#1c3c23"/>`;
 M('M456 353L590 356M500 346L597 358M498 352L596 359M475 350L515 346 621 351M558 346L558 350M484 355L598 359M604 356L622 349M662 351L680 358M665 350L683 360 810 355M690 360L828 363M727 351L728 354 810 358M760 353L793 345',.8);M('M500 347L598 357M684 359L826 362',1.3);s+='<ellipse cx="505" cy="345" rx="5" ry="2.500" fill="#315935"/><ellipse cx="781" cy="351" rx="6" ry="2.500" fill="#315935"/>';
 P('630 419L647 419 642 478 625 478',L);M('M631 420L634 475M640 420L632 475M646 420L641 476');
 /* left arm and mounting plate */
 P('412 394L485 396 500 394 515 418 550 437 528 438 410 397',L);P('485 397Q492 400 487 402L504 400 508 424 486 416','#6cab6c');stripes(488,506,5,()=>400,x=>416+(x-488)*.35,'#4d804e');
 P('456 350L480 353Q484 358 487 363L500 381 533 417 550 437 587 472 601 475 583 497 566 475 533 440 503 421 501 400 487 402 485 396Q486 390 483 385L474 373',L);
 P('503 400L501 421 532 438 528 420','#6fb16e');P('500 381L533 417 550 437 533 440 511 416 500 396',L);
 P('533 438L567 475 583 495 582 552 533 495','url(#sideL)');P('410 397L483 418 528 437 533 438 533 495 455 470 410 456','#80cf7e');
 P('528 438L533 438 533 496 528 492','#568f56');P('408 396h4v60q-3 0-4-3','#2a4e2e');
 M('M410 397L480 418 528 438M410 397L456 405 513 422 550 437M457 405V413L472 430 483 416V408M486 402L483 416 513 422M500 381L511 416 532 418M477 376L500 381 487 396M460 353L477 376 480 350M487 396L487 381M533 440L550 437 567 475 600 475 583 497 567 475V534M549 457L540 502 533 440M549 457L549 514 567 475');
 fan(442,434,3,[[410,397],[410,456],[472,428],[472,458]]);fan(472,430,3,[[528,437],[442,436],[457,413]]);fan(472,458,3.2,[[528,437],[533,495],[410,456],[455,470],[473,476],[442,434]]);
 M('M412 394L456 404M442 434L472 458M513 422L550 437',2,'#28472b');
 for(const [x,y]of[[442,434],[472,430],[472,458]])s+=`<circle cx="${x}" cy="${y}" r="3.800" fill="#355e38" stroke="#24432a"/>`;
 /* right arm and mounting plate */
 P('769 423L807 405 865 407 867 410 813 423 740 443',L);P('793 405L807 405 804 416 756 432 740 424 771 412','#65a366');
 P('803 361L828 362 826 370 793 397 797 404 775 411 757 430 737 445 698 477 677 497 663 475 687 473 720 442 740 423 778 390',L);
 P('677 497L698 477 737 445 740 500 698 535 677 553','url(#sideR)');P('740 443L813 423 867 410V466L807 484 740 500','#7fcd7d');P('735 445L741 443 740 500 735 505','#588f57');P('864 408h4v59h-4z','#284c2d');
 M('M803 361L778 390 791 399 828 361M778 390L740 423 778 408 775 390M740 423L757 430M720 442L740 443 758 428M720 442L698 477M665 475L698 477 677 497zM698 477L699 535M718 462L734 505 738 447M718 462L718 518M718 462L701 530M718 462L720 442M740 443L813 423 807 405M813 423L866 410M800 439L805 428');
 fan(800,439,3.2,[[740,443],[833,445],[800,468],[806,427]]);fan(833,446,3.2,[[866,410],[813,423],[864,468],[800,439],[800,468]]);fan(800,468,3.2,[[740,443],[740,500],[864,468],[806,484],[833,446],[800,439]]);
 M('M800 438L833 447 801 468M820 414L866 409',2,'#28472b');M('M740 443L799 425',1.5);
 for(const [x,y]of[[800,439],[833,446],[800,468]])s+=`<circle cx="${x}" cy="${y}" r="3.800" fill="#355e38" stroke="#24432a"/>`;
 /* hub */
 P('583 497L601 475 612 473 662 474 677 497 676 515 582 513',L);M('M600 475L583 497 597 511 600 475 609 490M597 511L605 503M677 497L663 475 654 490 677 512M582 513L677 514M612 482L601 475M650 483L663 475M676 514L652 503M597 511L613 508');
 s+='<ellipse cx="630" cy="495" rx="26" ry="17" fill="#7fc97c" stroke="#4b874b"/>';for(let i=0;i<44;i++){const a=i*Math.PI/22;M(`M${630+26*Math.cos(a)} ${495+17*Math.sin(a)}L${630+19*Math.cos(a)} ${499+11*Math.sin(a)}`,.6)}
 s+='<ellipse cx="630" cy="499" rx="18.500" ry="11" fill="#427343" stroke="#234527"/>';stripes(614,646,14,x=>499-10*Math.sqrt(1-((x-630)/18)**2),x=>499+10*Math.sqrt(1-((x-630)/18)**2),'#17361d',.8);
 P('582 513L676 514 674 556 673 597Q672 607 662 609L592 609Q580 606 580 598L580 553','#c7f7c5','#4e7e50');P('580 597Q585 607 597 606L660 607Q669 605 673 594V600Q671 609 662 609L592 609Q580 608 580 598','#7fbd7d','none');
 M('M640 515L638 555 637 606M580 553L638 555 674 556M580 586L603 588M649 590L674 585M582 605L668 607',.9,'#365e3a');
 const fc='#3d6a41';
 fan(604,543,3,[[582,514],[580,553],[638,555],[597,513],[623,514],[640,515]],fc,.4);fan(651,544,3,[[640,515],[638,555],[662,515],[676,515],[674,556]],fc,.4);
 fan(627,566,3,[[580,553],[638,555],[603,588],[637,606]],fc,.4);fan(603,588,3,[[580,553],[627,566],[637,606]],fc,.4);fan(649,590,3,[[638,555],[674,556],[637,606]],fc,.4);
 for(let i=0;i<9;i++){M(`M603 588L${580+i*2.5} ${588+Math.min(18,i*3.5)}M649 590L${673-i*1.8} ${588+Math.min(18,i*3.5)}`,.5)}
 for(const [x,y,c]of[[604,543,'#315b36'],[651,544,'#315b36'],[627,566,'#315b36'],[603,589,'#d9cfd9'],[649,590,'#d9cfd9']])s+=`<ellipse cx="${x}" cy="${y}" rx="4" ry="3.800" fill="${c}" stroke="#2d4e31" stroke-width="1.200"/>`;
 M('M676.500 499V553',1.5);
 /* view cube */
 s+=`<path d="M1210 207h44l-3 5h-36z" fill="#bbb" opacity=".45"/><path d="M1213 155L1249 156 1250 175 1208 175z" fill="#ebebec"/><path d="M1208 175L1250 175 1249 206 1210 206z" fill="#dfdfe0"/><path d="M1208 175L1213 155 1249 156V175zM1208 175L1210 206" fill="none" stroke="#777" stroke-dasharray="5 2" stroke-width="1"/><path d="M1204 206.500h45" stroke="#7bdc7c" stroke-width="2"/><path d="M1251.500 171L1249 208" stroke="#5b50d5" stroke-width="2.500"/><g font-family="Liberation Sans,sans-serif" font-weight="bold"><text x="1211" y="194.500" font-size="7.500" textLength="36" lengthAdjust="spacingAndGlyphs" fill="#777b80">IZQUIERDA</text><text transform="translate(1227 156) rotate(90)" font-size="8" textLength="18" lengthAdjust="spacingAndGlyphs" fill="#777b80">ARRIBA</text><text x="1248" y="168" font-size="10" font-weight="normal" fill="#5b50e8">Z</text><text x="1195" y="210" font-size="10" fill="#7de37e">Y</text></g>`;
 const gr=(id,stops,v)=>`<linearGradient id="${id}" ${v?'x2="0" y2="1"':''}>${stops.map(([o,c])=>`<stop offset="${o}" stop-color="${c}"/>`).join('')}</linearGradient>`;
 return `<style>:host{display:block;width:1280px;height:554px;background:#fff}</style><svg width="1280" height="554" viewBox="0 128 1280 554"><defs>${gr('arch',[[0,'#5d9c5d'],[.13,'#7dca7b'],[.4,'#8ddd8a'],[.75,'#89d887'],[.9,'#76bd74'],[1,'#528f53']])}${gr('tabL',[[0,'#82cf80'],[.25,'#69a868'],[.7,'#7ecb7c'],[1,'#497d4a']])}${gr('tabR',[[0,'#5d9c5c'],[.4,'#86d584'],[1,'#5e9b5e']])}${gr('dk',[[0,'#70b26f'],[1,'#4d834e']])}${gr('dk2',[[0,'#558a54'],[1,'#7dc97b']])}${gr('dkl',[[0,'#65a465'],[.6,'#4d824e'],[1,'#2e5332']],1)}${gr('wallL',[[0,'#75b974'],[.35,'#568d56'],[.8,'#5d975d'],[1,'#375c3a']])}${gr('wallR',[[0,'#467448'],[.3,'#6cab6b'],[.7,'#548b55'],[1,'#315936']])}${gr('cyl',[[0,'#4b7c4d'],[.25,'#68a568'],[.48,'#457548'],[.6,'#659f65'],[.9,'#72ad71'],[1,'#3f6b43']])}${gr('bore',[[0,'#42704a'],[.3,'#558a56'],[.55,'#6fac6f'],[1,'#4a7a4b']])}${gr('sideL',[[0,'#5f9f60'],[.3,'#7eca7c'],[1,'#83d181']])}${gr('sideR',[[0,'#75bd73'],[.8,'#77bf75'],[1,'#558c55']])}</defs>${s}</svg>`}});
define('model-viewport',class extends Base{render(){return `<style>:host{display:block;position:relative;height:553px}model-scene{margin-top:-1px}.o{position:absolute;inset:0;display:grid;grid-template-columns:463px 1fr;padding:5px 4px 4px}.l{display:flex;flex-direction:column}.l i{flex:1}.v{position:absolute;left:528px;top:526px}</style><model-scene></model-scene><div class="o"><div class="l"><panel-head rew end="minus"><ui-label s="11" w="62" c="#666">NAVEGADOR</ui-label></panel-head><browser-tree></browser-tree><i></i><panel-head end="add"><ui-label s="11" w="69" c="#666">COMENTARIOS</ui-label></panel-head></div><save-notice></save-notice></div><view-bar class="v"></view-bar>`}});
define('task-bar',class extends Base{render(){return `<style>:host{display:flex;height:37px;background:#0c0e10;color:#fff}.c{width:45.800px;display:flex;align-items:center;justify-content:center}.c:nth-of-type(-n+3){padding-right:2px}.a{background:#3b3e40;border-bottom:2px solid #8fc0e8}i{flex:1}.t{display:flex;align-items:center;padding-right:23px}.k{display:flex;flex-direction:column;align-items:center;margin:0 17px 0 14px}</style>${['win','search','task','chrome','word','explorer','power','teams','solver','f360'].map(n=>`<div class="c ${n=='f360'?'a':''}"><ui-icon name="${n}"></ui-icon></div>`).join('')}<i></i><div class="t"><ui-icon name="people" style="margin-right:21px"></ui-icon><ui-icon name="up" style="margin-right:10px"></ui-icon><ui-icon name="battery" style="margin-right:9px"></ui-icon><ui-icon name="wifi" style="margin-right:7px"></ui-icon><ui-icon name="sound" style="margin-right:10px"></ui-icon><ui-label s="11.5" w="18" f="Noto Sans">ESP</ui-label><div class="k"><ui-label s="12" lh="17" w="54" f="Noto Sans">04:57 p. m.</ui-label><ui-label s="12" lh="17" w="55" f="Noto Sans">21/09/2022</ui-label></div><ui-icon name="note"></ui-icon></div>`}});
define('fusion-app',class extends Base{render(){return `<style>:host{display:flex;flex-direction:column;width:1280px;height:719px;overflow:hidden}:host>*{flex:none}</style><title-bar></title-bar><tab-bar></tab-bar><tool-ribbon></tool-ribbon><model-viewport></model-viewport><task-bar></task-bar>`}});
</script></body></html>
